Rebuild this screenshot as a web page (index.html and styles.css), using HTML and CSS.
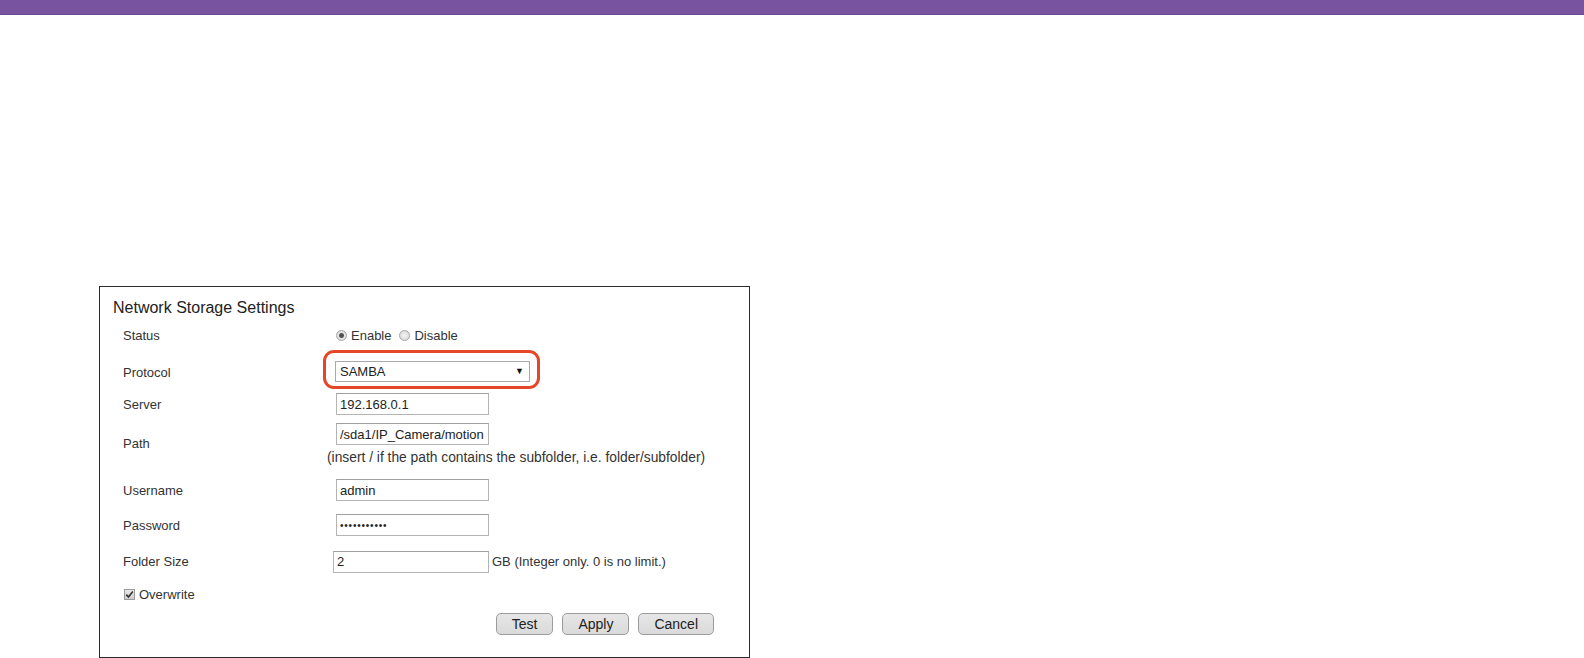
FILE: index.html
```html
<!DOCTYPE html>
<html lang="en">
<head>
    <meta charset="UTF-8">
    <title>Network Storage Settings</title>
    <link rel="stylesheet" href="styles.css">
</head>
<body>
    <div class="topbar"></div>

    <div class="panel">
        <div class="panel-title">Network Storage Settings</div>

        <div class="row row-status">
            <div class="label">Status</div>
            <div class="control">
                <label class="opt"><input type="radio" name="status" checked> Enable</label>
                <label class="opt"><input type="radio" name="status"> Disable</label>
            </div>
        </div>

        <div class="row row-protocol">
            <div class="label">Protocol</div>
            <div class="control">
                <div class="highlight">
                    <div class="select-wrap">
                        <select class="select">
                            <option>SAMBA</option>
                            <option>FTP</option>
                        </select>
                        <span class="arrow">&#9660;</span>
                    </div>
                </div>
            </div>
        </div>

        <div class="row row-server">
            <div class="label">Server</div>
            <div class="control">
                <input class="field" type="text" value="192.168.0.1">
            </div>
        </div>

        <div class="row row-path">
            <div class="label">Path</div>
            <div class="control control-stack">
                <input class="field" type="text" value="/sda1/IP_Camera/motion">
                <div class="hint">(insert / if the path contains the subfolder, i.e. folder/subfolder)</div>
            </div>
        </div>

        <div class="row row-user">
            <div class="label">Username</div>
            <div class="control">
                <input class="field" type="text" value="admin">
            </div>
        </div>

        <div class="row row-pass">
            <div class="label">Password</div>
            <div class="control">
                <input class="field field-pass" type="password" value="adminadmin1">
            </div>
        </div>

        <div class="row row-size">
            <div class="label">Folder Size</div>
            <div class="control">
                <input class="field" type="text" value="2">
                <span class="unit">GB (Integer only. 0 is no limit.)</span>
            </div>
        </div>

        <div class="row row-overwrite">
            <label class="check">
                <span class="box">
                    <svg width="9" height="9" viewBox="0 0 9 9"><path d="M1.2 4.6 L3.5 7 L7.8 1.6" fill="none" stroke="#333" stroke-width="1.6"/></svg>
                </span>
                Overwrite
            </label>
        </div>

        <div class="actions">
            <button class="btn">Test</button>
            <button class="btn">Apply</button>
            <button class="btn">Cancel</button>
        </div>
    </div>
</body>
</html>
```

FILE: styles.css
```css
/* General */
body {
    margin: 0;
    padding: 0;
    background-color: #fff;
    font-family: "Liberation Sans", Arial, sans-serif;
    font-size: 13px;
    color: #333;
}

.topbar {
    height: 14px;
    background-color: #7853a0;
    border-bottom: 1px solid #6c4894;
}

/* Settings panel */
.panel {
    box-sizing: border-box;
    width: 651px;
    height: 372px;
    margin: 271px 0 0 99px;
    padding: 0 35px 0 23px;
    border: 1px solid #2b2b2b;
}

.panel-title {
    margin: 11px 0 0 -10px;
    line-height: 20px;
    font-size: 16px;
    color: #222;
}

.row {
    display: flex;
    align-items: center;
}

.label {
    width: 213px;
    flex-shrink: 0;
}

.control {
    display: flex;
    align-items: center;
}

.row-status { height: 34px; }
.row-protocol { height: 40px; }
.row-server { height: 24px; }
.row-path { height: 55px; }
.row-user { height: 38px; }
.row-pass { height: 32px; }
.row-size { height: 41px; }
.row-overwrite { height: 24px; }

.control-stack {
    flex-direction: column;
    align-items: flex-start;
    padding-top: 2px;
}

.hint {
    margin: 5px 0 0 -9px;
    line-height: 16px;
    font-size: 13.8px;
}

/* Radios */
.opt {
    display: inline-flex;
    align-items: center;
    margin-right: 8px;
}

.opt input {
    appearance: none;
    -webkit-appearance: none;
    box-sizing: border-box;
    width: 11px;
    height: 11px;
    margin: 0 4px 0 0;
    border: 1px solid #a6a6a6;
    border-radius: 50%;
    background: radial-gradient(circle, #f4f4f4 0, #d2d2d2 100%);
}

.opt input:checked {
    background: radial-gradient(circle, #4a4a4a 0, #555 2px, #e6e6e6 3px, #cfcfcf 100%);
}

/* Select with highlight */
.highlight {
    margin: -2px 0 3px -13px;
    padding: 8px 7px 4px 9px;
    border: 3px solid #e5462a;
    border-radius: 11px;
}

.select-wrap {
    position: relative;
}

.select {
    appearance: none;
    -webkit-appearance: none;
    box-sizing: border-box;
    width: 195px;
    height: 21px;
    padding: 0 0 0 4px;
    border: 1px solid #a9a9a9;
    border-radius: 0;
    background-color: #fff;
    font-family: "Liberation Sans", Arial, sans-serif;
    font-size: 13px;
    color: #222;
}

.arrow {
    position: absolute;
    right: 6px;
    top: 5px;
    font-size: 9px;
    color: #111;
}

/* Text inputs */
.field {
    box-sizing: border-box;
    width: 153px;
    height: 22px;
    padding: 0 3px;
    border: 1px solid #b4b4b4;
    border-top-color: #a0a0a0;
    font-family: "Liberation Sans", Arial, sans-serif;
    font-size: 13px;
    color: #222;
}

.field-pass {
    font-size: 10px;
    letter-spacing: 0.8px;
}

.row-size .field {
    margin-left: -3px;
    width: 156px;
}

.unit {
    margin-left: 3px;
}

/* Checkbox */
.check {
    display: inline-flex;
    align-items: center;
    margin-left: 1px;
}

.box {
    box-sizing: border-box;
    display: inline-flex;
    align-items: center;
    justify-content: center;
    width: 11px;
    height: 11px;
    margin-right: 4px;
    border: 1px solid #9a9a9a;
    background: linear-gradient(#e8e8e8, #cfcfcf);
}

/* Buttons */
.actions {
    display: flex;
    justify-content: flex-end;
    gap: 9px;
    padding-top: 7px;
}

.btn {
    height: 22px;
    padding: 0 15px;
    border: 1px solid #9c9c9c;
    border-radius: 5px;
    background: linear-gradient(#e6e6e6, #dadada);
    font-family: "Liberation Sans", Arial, sans-serif;
    font-size: 14px;
    color: #222;
}
```
